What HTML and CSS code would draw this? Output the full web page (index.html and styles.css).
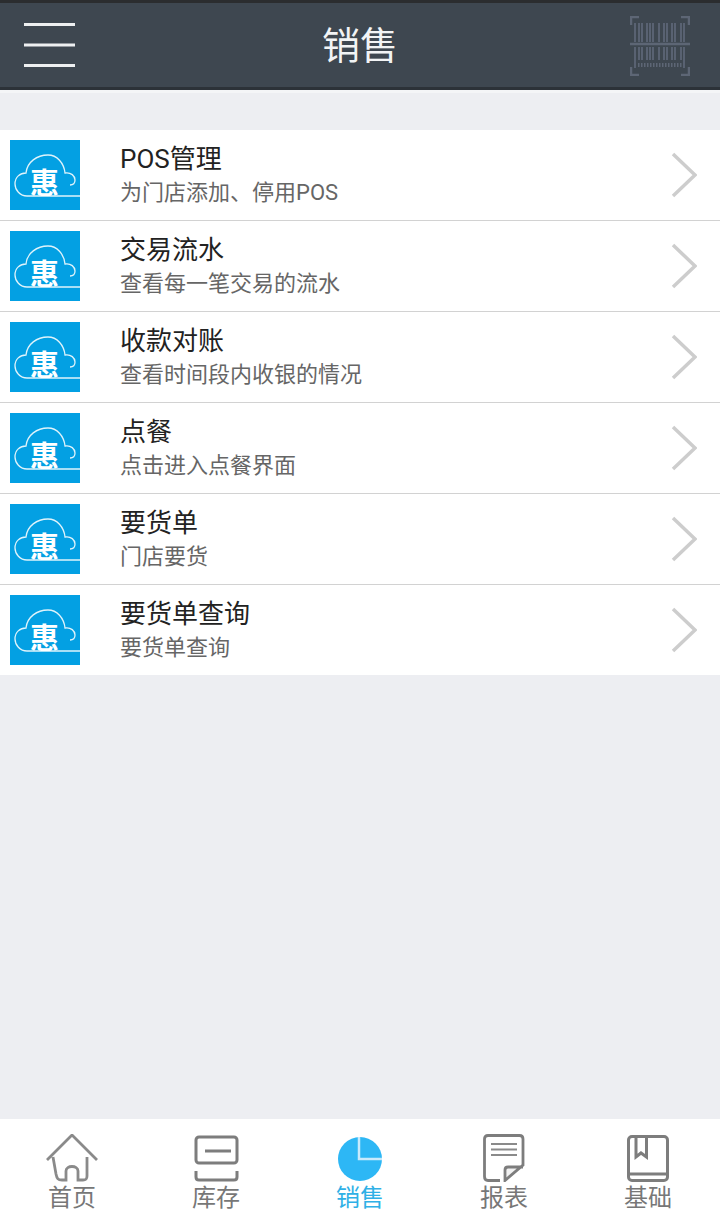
FILE: index.html
```html
<!DOCTYPE html>
<html lang="zh-CN">

<head>
    <meta charset="UTF-8">
    <title>销售</title>
    <link rel="stylesheet" href="styles.css">
</head>

<body>
    <svg class="sprites" width="0" height="0">
        <symbol id="cloud" viewBox="0 0 70 70">
            <path d="M70 56H17C10 56 5 50 5 44C5 37 10 33 16 33C17 22 27 15 38 15C47 15 54 23 55 33C61 32 65 36 65 40C65 43 63 45 60 45" fill="none" stroke="#dff3fb" stroke-width="1.300"/>
        </symbol>
        <symbol id="chevron" viewBox="0 0 26 46">
            <path d="M2 2L24 23L2 44" fill="none" stroke="#cdcdcd" stroke-width="3.500"/>
        </symbol>
    </svg>

    <header class="topbar">
        <svg class="menu-icon" viewBox="0 0 51 44">
            <path d="M0 1.500H51M0 22H51M0 42.500H51" stroke="#eef0f1" stroke-width="3"/>
        </svg>
        <h1>销售</h1>
        <svg class="scan-icon" viewBox="0 0 60 60">
            <path d="M1 9V1H9M51 1H59V9M1 51V59H9M51 59H59V51" fill="none" stroke="#5d6675" stroke-width="2.500"/>
            <path d="M0 28H60" stroke="#5d6675" stroke-width="2.500"/>
            <path d="M5 7V26M9 7V26M12 7V26M17 7V26M20 7V26M23 7V26M29 7V26M34 7V26M37 7V26M42 7V26M45 7V26M51 7V26M54 7V26" stroke="#596272" stroke-width="2"/>
            <path d="M5 31V52M9 31V44M12 31V44M17 31V44M20 31V44M23 31V44M29 31V44M34 31V44M37 31V44M42 31V44M45 31V44M51 31V44M54 31V52" stroke="#596272" stroke-width="2"/>
            <path d="M8 49H53" stroke="#5d6675" stroke-width="4" stroke-dasharray="1.500 1.500"/>
        </svg>
    </header>

    <main class="content">
        <ul class="menu-list">
            <li class="menu-item">
                <div class="item-logo"><svg><use href="#cloud"/></svg><span>惠</span></div>
                <div class="item-text"><h2>POS管理</h2><p>为门店添加、停用POS</p></div>
                <svg class="chevron"><use href="#chevron"/></svg>
            </li>
            <li class="menu-item">
                <div class="item-logo"><svg><use href="#cloud"/></svg><span>惠</span></div>
                <div class="item-text"><h2>交易流水</h2><p>查看每一笔交易的流水</p></div>
                <svg class="chevron"><use href="#chevron"/></svg>
            </li>
            <li class="menu-item">
                <div class="item-logo"><svg><use href="#cloud"/></svg><span>惠</span></div>
                <div class="item-text"><h2>收款对账</h2><p>查看时间段内收银的情况</p></div>
                <svg class="chevron"><use href="#chevron"/></svg>
            </li>
            <li class="menu-item">
                <div class="item-logo"><svg><use href="#cloud"/></svg><span>惠</span></div>
                <div class="item-text"><h2>点餐</h2><p>点击进入点餐界面</p></div>
                <svg class="chevron"><use href="#chevron"/></svg>
            </li>
            <li class="menu-item">
                <div class="item-logo"><svg><use href="#cloud"/></svg><span>惠</span></div>
                <div class="item-text"><h2>要货单</h2><p>门店要货</p></div>
                <svg class="chevron"><use href="#chevron"/></svg>
            </li>
            <li class="menu-item">
                <div class="item-logo"><svg><use href="#cloud"/></svg><span>惠</span></div>
                <div class="item-text"><h2>要货单查询</h2><p>要货单查询</p></div>
                <svg class="chevron"><use href="#chevron"/></svg>
            </li>
        </ul>
    </main>

    <nav class="tabbar">
        <a class="tab">
            <svg viewBox="0 0 52 48"><path d="M1 26L26 1L51 26M7 23L10 40C11 45 12 46 16 46H20V37C20 31 32 31 32 37V46H37C40 46 41 45 41 42V23" fill="none" stroke="#8a8a8a" stroke-width="2.800"/></svg>
            <span>首页</span>
        </a>
        <a class="tab">
            <svg viewBox="0 0 52 48"><rect x="6" y="3" width="41" height="26" rx="3" fill="none" stroke="#7d7d7d" stroke-width="3"/><path d="M6 37V43C6 45 7 46 9 46H44C46 46 47 45 47 43V37M15 17H41" fill="none" stroke="#7d7d7d" stroke-width="3"/></svg>
            <span>库存</span>
        </a>
        <a class="tab tab-active">
            <svg viewBox="0 0 52 48"><circle cx="26" cy="25" r="22" fill="#2db7f5"/><path d="M25 3V25H48" fill="none" stroke="#c8eafc" stroke-width="2.500"/></svg>
            <span>销售</span>
        </a>
        <a class="tab">
            <svg viewBox="0 0 52 48"><path d="M45 33L27 47L26 36C26 34 27 33 29 33Z" fill="#f1f1f1"/><path d="M22 46.500H10C7.500 46.500 6.500 45 6.500 42.500V5C6.500 3 7.500 1.500 10 1.500H41.500C44 1.500 45 3 45 5V31L27 46.500V36C27 34 28 33 30 33H45" fill="none" stroke="#7d7d7d" stroke-width="2.800"/><path d="M13 10H39M13 15.500H39M13 21H39" stroke="#8a8a8a" stroke-width="2.200"/></svg>
            <span>报表</span>
        </a>
        <a class="tab">
            <svg viewBox="0 0 52 48"><rect x="6.500" y="2.500" width="39" height="44" rx="3.500" fill="none" stroke="#7d7d7d" stroke-width="3"/><path d="M6.500 40H45.500M14 3V23L19 19L24.500 23V3" fill="none" stroke="#7d7d7d" stroke-width="3"/></svg>
            <span>基础</span>
        </a>
    </nav>
</body>

</html>
```

FILE: styles.css
```css
* {
    margin: 0;
    padding: 0;
    box-sizing: border-box;
}

html,
body {
    height: 1230px;
}

body {
    width: 720px;
    overflow: hidden;
    display: flex;
    flex-direction: column;
    background: #edeef2;
    font-family: Roboto, "Noto Sans CJK SC", sans-serif;
}

.sprites {
    position: absolute;
}

.topbar {
    height: 90px;
    flex-shrink: 0;
    display: grid;
    grid-template-columns: 1fr auto 1fr;
    align-items: center;
    padding: 0 24px;
    background: #3e4750;
    border-top: 3px solid #2b2d2f;
    border-bottom: 3px solid #2c3238;
    color: #f2f4f5;
}

.topbar h1 {
    margin-top: 2px;
    font-size: 38px;
    font-weight: 400;
    line-height: 44px;
}

.menu-icon {
    width: 51px;
    height: 44px;
}

.scan-icon {
    width: 60px;
    height: 60px;
    justify-self: end;
    margin: 2px 6px 0 0;
}

.content {
    flex: 1;
    padding-top: 37px;
    border-top: 3px solid #f4f5f7;
}

.menu-list {
    list-style: none;
    background: #fff;
}

.menu-item {
    height: 91px;
    display: flex;
    align-items: center;
    padding: 0 23px 0 10px;
    border-bottom: 1px solid #d2d2d2;
}

.menu-item:last-child {
    height: 90px;
    border-bottom: none;
}

.item-logo {
    position: relative;
    width: 70px;
    height: 70px;
    flex-shrink: 0;
    background: #03a0e3;
}

.item-logo svg {
    display: block;
    width: 70px;
    height: 70px;
}

.item-logo span {
    position: absolute;
    left: 20px;
    top: 30px;
    font-size: 29px;
    font-weight: 700;
    line-height: 29px;
    color: #fff;
}

.item-text {
    flex: 1;
    margin-left: 40px;
    padding-top: 2px;
}

.item-text h2 {
    font-size: 26px;
    font-weight: 400;
    line-height: 32px;
    color: #222;
}

.item-text p {
    margin-top: 2px;
    font-size: 22px;
    line-height: 32px;
    color: #666;
}

.chevron {
    width: 26px;
    height: 46px;
}

.tabbar {
    height: 111px;
    flex-shrink: 0;
    display: flex;
    background: #fff;
    padding-top: 15px;
}

.tab {
    flex: 1;
    display: flex;
    flex-direction: column;
    align-items: center;
    color: #777;
    font-size: 24px;
    line-height: 32px;
}

.tab svg {
    width: 52px;
    height: 48px;
}

.tab-active {
    color: #2fb0e6;
}
```
